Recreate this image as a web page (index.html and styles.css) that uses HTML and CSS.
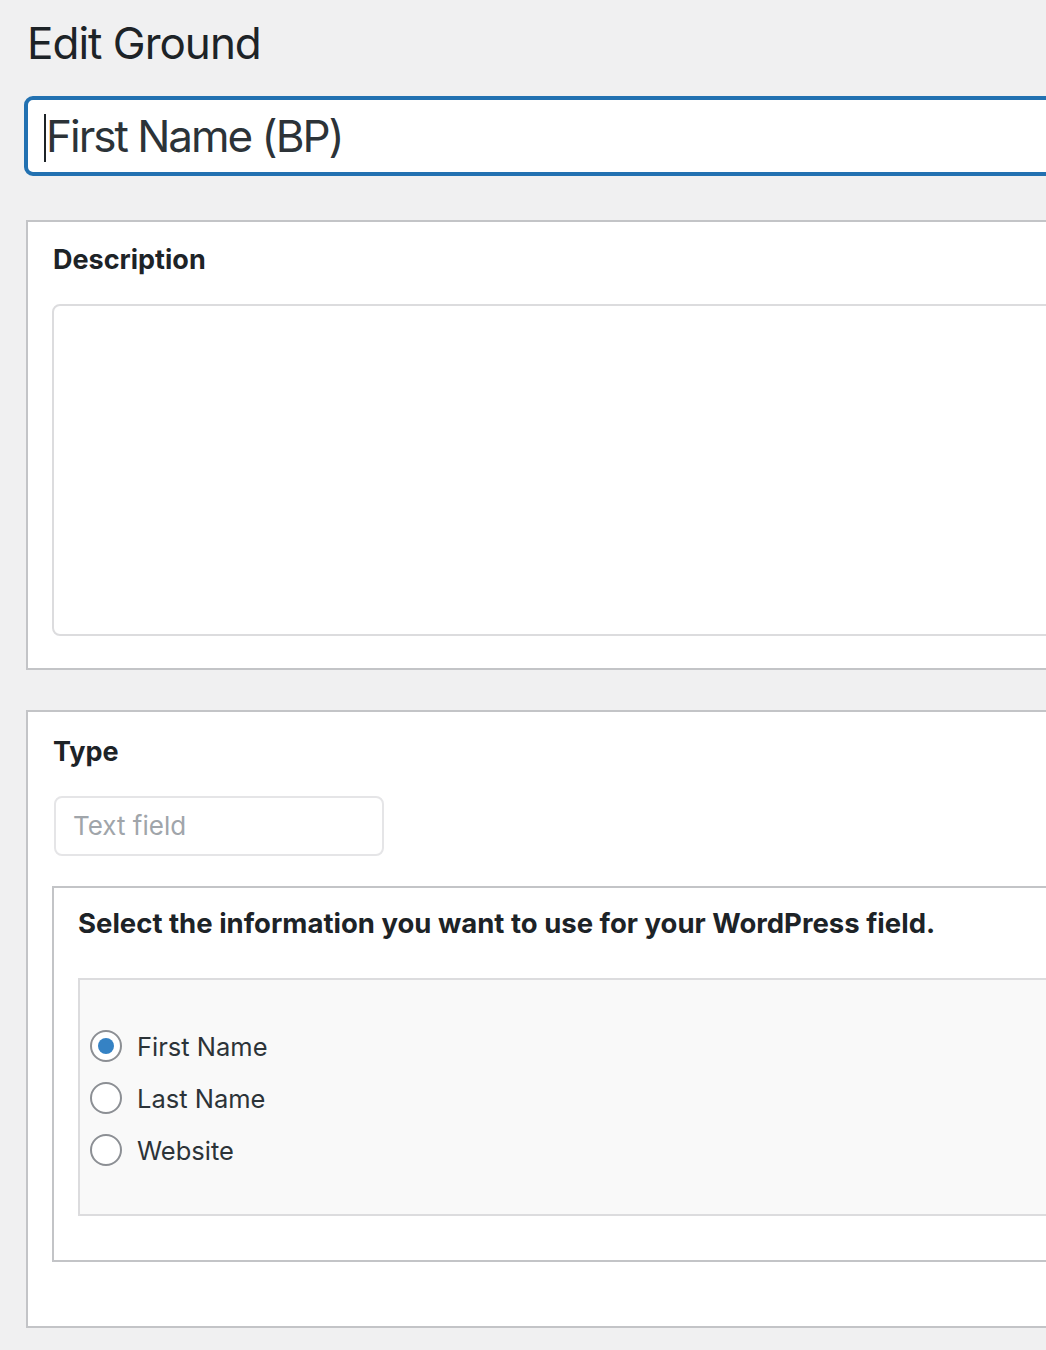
FILE: index.html
```html
<!DOCTYPE html>
<html>
<head>
<meta charset="utf-8">
<link rel="stylesheet" href="styles.css">
</head>
<body>
<div class="wrap">
  <h1 class="page-title">Edit Ground</h1>
  <div class="title-input"><span class="caret"></span>First Name (BP)</div>

  <div class="panel panel-desc">
    <h2 class="panel-label">Description</h2>
    <div class="textarea"></div>
  </div>

  <div class="panel panel-type">
    <h2 class="panel-label">Type</h2>
    <div class="select">Text field</div>
    <div class="inner-box">
      <h3 class="inner-heading">Select the information you want to use for your WordPress field.</h3>
      <div class="fieldset">
        <label class="radio-row"><span class="radio checked"></span>First Name</label>
        <label class="radio-row"><span class="radio"></span>Last Name</label>
        <label class="radio-row"><span class="radio"></span>Website</label>
      </div>
    </div>
  </div>
</div>
</body>
</html>
```
FILE: styles.css
```css
html, body {
  margin: 0;
  padding: 0;
  background: #f0f0f1;
  overflow: hidden;
}
body {
  font-family: Inter, "Noto Sans", "Liberation Sans", sans-serif;
  color: #1d2327;
}
.wrap {
  width: 1200px;
  padding: 14px 0 0 24px;
  box-sizing: border-box;
}
.page-title {
  margin: 0 0 0 3px;
  font-size: 44px;
  font-weight: 400;
  line-height: 58px;
  color: #1d2327;
  letter-spacing: -1px;
}
.title-input {
  margin-top: 24px;
  height: 80px;
  box-sizing: border-box;
  border: 4px solid #2271b1;
  border-radius: 9px;
  background: #fff;
  font-size: 44px;
  line-height: 72px;
  padding-left: 18px;
  color: #2c3338;
  position: relative;
  letter-spacing: -2px;
}
.caret {
  position: absolute;
  left: 16px;
  top: 14px;
  width: 2px;
  height: 48px;
  background: #1d2327;
}
.panel {
  margin-left: 2px;
  background: #fff;
  border: 2px solid #c3c4c7;
  box-sizing: border-box;
  padding: 0 0 0 24px;
}
.panel-desc {
  margin-top: 44px;
  height: 450px;
  padding-top: 20px;
}
.panel-type {
  margin-top: 40px;
  height: 618px;
  padding-top: 22px;
}
.panel-label {
  margin: 0 0 0 1px;
  font-size: 27px;
  font-weight: 700;
  line-height: 36px;
  color: #1d2327;
}
.textarea {
  margin-top: 26px;
  height: 332px;
  box-sizing: border-box;
  border: 2px solid #dcdcde;
  border-radius: 8px;
  background: #fff;
}
.select {
  margin: 26px 0 0 2px;
  width: 330px;
  height: 60px;
  box-sizing: border-box;
  border: 2px solid #e5e5e7;
  border-radius: 8px;
  background: #fff;
  font-size: 26px;
  line-height: 56px;
  padding-left: 17px;
  color: #a0a5aa;
}
.inner-box {
  margin-top: 30px;
  height: 376px;
  box-sizing: border-box;
  border: 2px solid #c3c4c7;
  border-right: none;
  padding: 17px 0 0 24px;
}
.inner-heading {
  margin: 0;
  font-size: 27.5px;
  font-weight: 700;
  line-height: 36px;
  color: #1d2327;
}
.fieldset {
  margin-top: 37px;
  height: 238px;
  box-sizing: border-box;
  border: 2px solid #dcdcde;
  border-right: none;
  background: #f9f9f9;
  padding: 50px 0 0 10px;
  display: flex;
  flex-direction: column;
  gap: 20px;
}
.radio-row {
  display: flex;
  align-items: center;
  gap: 15px;
  height: 32px;
  font-size: 25.5px;
  color: #2c3338;
}
.radio {
  width: 32px;
  height: 32px;
  box-sizing: border-box;
  border: 2px solid #8c8f94;
  border-radius: 50%;
  background: #fff;
  position: relative;
  flex: none;
}
.radio.checked::after {
  content: "";
  position: absolute;
  left: 6px;
  top: 6px;
  width: 16px;
  height: 16px;
  border-radius: 50%;
  background: #3582c4;
}
```
